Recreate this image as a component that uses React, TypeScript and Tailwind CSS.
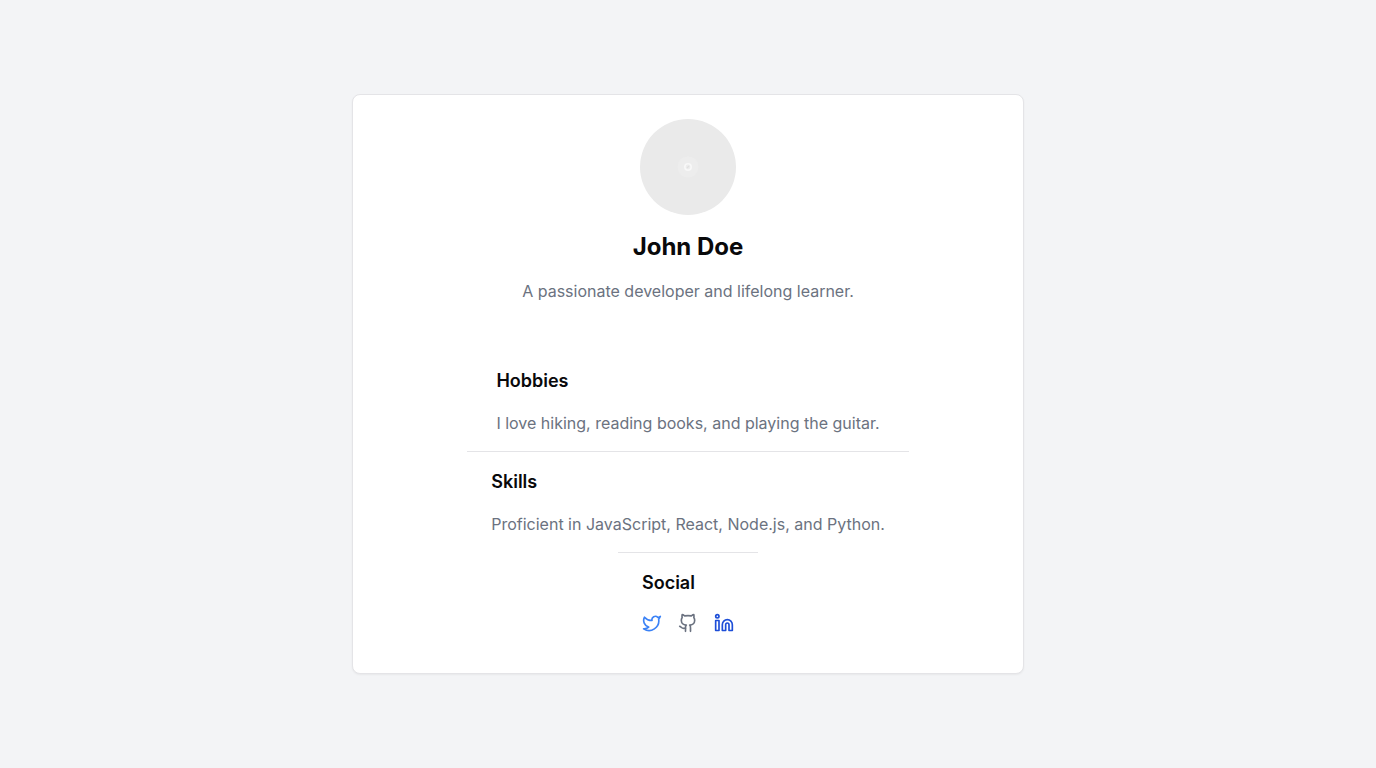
import React from "react";
import { Github, Linkedin, Twitter } from "lucide-react";

const links = [
  { label: "Twitter", Icon: Twitter, color: "text-[#3b82f6]" },
  { label: "GitHub", Icon: Github, color: "text-[#6b7280]" },
  { label: "LinkedIn", Icon: Linkedin, color: "text-[#1d4ed8]" },
];

function Avatar() {
  return (
    <svg viewBox="0 0 96 96" className="size-24 rounded-full" role="img" aria-label="John Doe">
      <rect width="96" height="96" fill="#eaeaea" />
      <circle cx="48" cy="48" r="10.5" fill="#ededed" />
      <circle cx="48" cy="48" r="3.2" fill="none" stroke="#f8f8f8" strokeWidth="1.6" />
      <path d="M47 49l2-2" stroke="#e0e0e0" strokeWidth="1.2" />
    </svg>
  );
}

function Section({ title, children }: { title: string; children: React.ReactNode }) {
  return (
    <section className="border-[#e4e4e7] px-6 py-4 not-first:border-t">
      <h2 className="text-lg font-semibold">{title}</h2>
      <div className="mt-4 text-base text-[#6b7280]">{children}</div>
    </section>
  );
}

export default function App() {
  return (
    <main className="flex min-h-screen items-center justify-center bg-[#f3f4f6] font-['Inter',sans-serif] text-[#09090b]">
      <article className="w-full max-w-2xl rounded-lg border border-[#e4e4e7] bg-white shadow-xs">
        <header className="flex flex-col items-center p-6 text-center">
          <Avatar />
          <h1 className="mt-4 text-2xl font-bold">John Doe</h1>
          <p className="mt-4 text-base text-[#6b7280]">A passionate developer and lifelong learner.</p>
        </header>
        <div className="flex flex-col items-center py-6">
          <Section title="Hobbies">
            <p>I love hiking, reading books, and playing the guitar.</p>
          </Section>
          <Section title="Skills">
            <p>Proficient in JavaScript, React, Node.js, and Python.</p>
          </Section>
          <Section title="Social">
            <nav className="flex gap-4" aria-label="Social">
              {links.map(({ label, Icon, color }) => (
                <a key={label} href="#" aria-label={label} className={color}>
                  <Icon size={20} />
                </a>
              ))}
            </nav>
          </Section>
        </div>
      </article>
    </main>
  );
}
